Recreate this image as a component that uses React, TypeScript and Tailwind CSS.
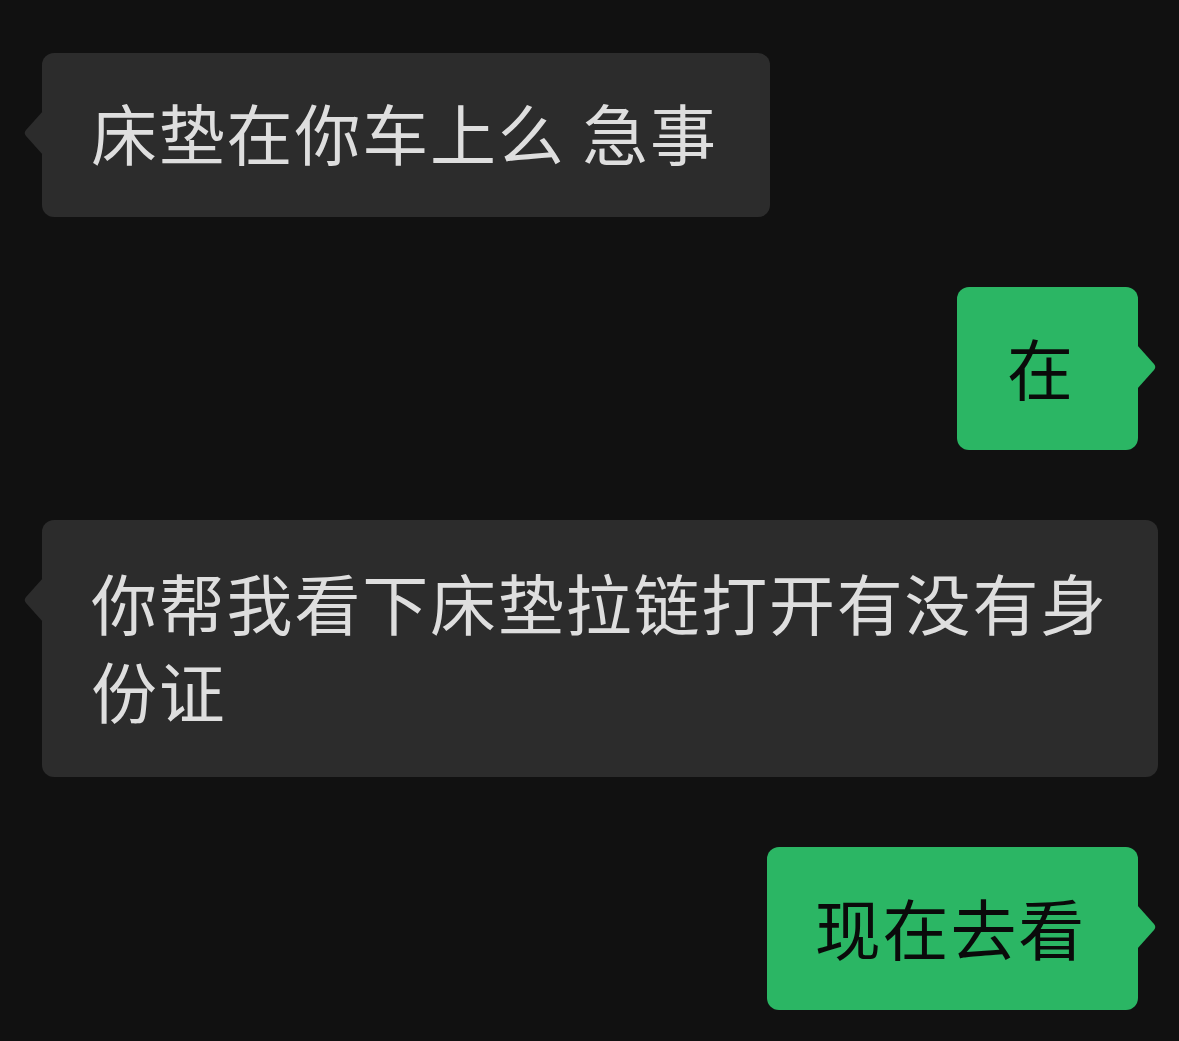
import React from "react";

function LeftTail({ color }: { color: string }) {
  return (
    <svg
      className="absolute left-[-20px] top-[58px]"
      width="21"
      height="44"
      viewBox="0 0 21 44"
    >
      <path d="M21 0 L21 44 L4 25 Q1.5 22 4 19 Z" fill={color} />
    </svg>
  );
}

function RightTail({ color }: { color: string }) {
  return (
    <svg
      className="absolute right-[-20px] top-[58px]"
      width="21"
      height="44"
      viewBox="0 0 21 44"
    >
      <path d="M0 0 L0 44 L17 25 Q19.5 22 17 19 Z" fill={color} />
    </svg>
  );
}

const font = {
  fontFamily: '"Noto Sans CJK SC", "Noto Sans", sans-serif',
};

export default function App() {
  return (
    <div
      className="w-[1179px] h-[1041px] bg-[#111111] overflow-hidden flex flex-col gap-[70px] pt-[53px] pl-[42px] pr-[41px]"
      style={font}
    >
      <div className="flex justify-start">
        <div className="relative bg-[#2c2c2c] rounded-[12px] pl-[49px] pr-[52px] pt-[34px] pb-[42px] text-[66px] leading-[88px] tracking-[1.8px] text-[#dedede]">
          <LeftTail color="#2c2c2c" />
          <span>床垫在你车上么 急事</span>
        </div>
      </div>

      <div className="flex justify-end">
        <div className="relative bg-[#2bb664] rounded-[12px] min-w-[181px] pl-[50px] pr-[52px] pt-[35px] pb-[40px] text-[66px] leading-[88px] tracking-[1.8px] text-[#0a0a0a]">
          <RightTail color="#2bb664" />
          <span>在</span>
        </div>
      </div>

      <div className="flex justify-start">
        <div className="relative shrink-0 bg-[#2c2c2c] rounded-[12px] w-[1116px] pl-[49px] pr-[20px] pt-[37px] pb-[44px] text-[66px] leading-[88px] tracking-[1.8px] text-[#dedede]">
          <LeftTail color="#2c2c2c" />
          <div className="whitespace-nowrap">你帮我看下床垫拉链打开有没有身</div>
          <div className="whitespace-nowrap">份证</div>
        </div>
      </div>

      <div className="flex justify-end">
        <div className="relative bg-[#2bb664] rounded-[12px] pl-[48px] pr-[52px] pt-[35px] pb-[40px] text-[66px] leading-[88px] tracking-[1.8px] text-[#0a0a0a]">
          <RightTail color="#2bb664" />
          <span>现在去看</span>
        </div>
      </div>
    </div>
  );
}
